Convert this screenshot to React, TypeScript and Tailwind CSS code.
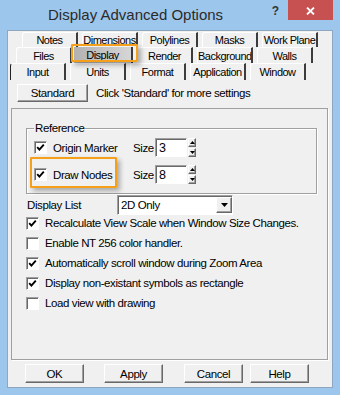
import type { ReactNode } from "react"

const raised =
	"border border-t-white border-l-white border-r-[#696969] border-b-[#696969] shadow-[inset_-1px_-1px_0_#a0a0a0]"
const sunken =
	"border border-t-[#a0a0a0] border-l-[#a0a0a0] border-r-white border-b-white shadow-[inset_1px_1px_0_#696969]"

const row1 = ["Notes", "Dimensions", "Polylines", "Masks", "Work Plane"]
const row3 = ["Input", "Units", "Format", "Application", "Window"]

const options = [
	{ label: "Recalculate View Scale when Window Size Changes.", on: true },
	{ label: "Enable NT 256 color handler.", on: false },
	{ label: "Automatically scroll window during Zoom Area", on: true },
	{ label: "Display non-existant symbols as rectangle", on: true },
	{ label: "Load view with drawing", on: false },
]

function Tab({ label, first }: { label: string; first?: boolean }) {
	return (
		<div
			className={`flex h-full w-[56px] shrink-0 items-center justify-center-safe overflow-hidden whitespace-nowrap rounded-tl-[3px] border-t border-l border-r-2 border-white border-r-[#3c3c3c] text-[11px] tracking-[-0.5px] ${first ? "border-l-[#222]" : ""}`}
		>
			{label}
		</div>
	)
}

function Highlight({ className }: { className: string }) {
	return (
		<div
			className={`pointer-events-none absolute z-10 rounded-[1px] border-2 border-[#f5a01a] shadow-[3px_3px_5px_rgba(0,0,0,0.3)] ${className}`}
		/>
	)
}

function Check({ on }: { on?: boolean }) {
	return (
		<span className={`flex h-[13px] w-[13px] shrink-0 items-center justify-center bg-white ${sunken}`}>
			{on && (
				<svg width="9" height="9" viewBox="0 0 9 9">
					<path d="M1.2 4.2 L3.4 6.6 L7.8 1.6" fill="none" stroke="#000" strokeWidth="1.9" />
				</svg>
			)}
		</span>
	)
}

function Arrow({ up }: { up?: boolean }) {
	return (
		<svg width="5" height="3" viewBox="0 0 5 3">
			<path d={up ? "M0 3 L2.5 0 L5 3Z" : "M0 0 L5 0 L2.5 3Z"} fill="#000" />
		</svg>
	)
}

function SizeField({ value }: { value: string }) {
	return (
		<div className="flex h-full items-center">
			<span className="w-[22px]">Size</span>
			<div className={`flex h-[19px] w-[32px] items-center bg-white pl-[3px] text-[12.5px] ${sunken}`}>{value}</div>
			<div className="ml-[1px] flex h-full w-[8px] flex-col gap-px">
				<div className={`flex flex-1 items-center justify-center bg-[#f0f0f0] ${raised}`}>
					<Arrow up />
				</div>
				<div className={`flex flex-1 items-center justify-center bg-[#f0f0f0] ${raised}`}>
					<Arrow />
				</div>
			</div>
		</div>
	)
}

function Button({ children, className }: { children: ReactNode; className: string }) {
	return (
		<div className={`flex h-full items-center justify-center bg-[#f0f0f0] ${raised} ${className}`}>{children}</div>
	)
}

export default function App() {
	return (
		<div className="h-[395px] w-[340px] overflow-hidden bg-[#9dc6ec] font-['Liberation_Sans',Arial,sans-serif] text-[11.5px] leading-[14px] tracking-[-0.4px] text-black">
			{/* Title bar */}
			<div className="flex h-[30px] tracking-normal">
				<div className="flex-1 pl-[48px] pt-[6px] text-[15px] leading-[18px] text-[#2b2b2b]">
					Display Advanced Options
				</div>
				<div className="mr-[9px] mt-[4px] text-[12px] font-bold leading-[14px] text-[#333]">?</div>
				<div className="mr-[7px] flex h-[20px] w-[45px] items-center justify-center bg-[#c75050] pt-[2px]">
					<svg width="9" height="8" viewBox="0 0 9 8">
						<path d="M1 0.5 L8 7.5 M8 0.5 L1 7.5" stroke="#fff" strokeWidth="1.8" />
					</svg>
				</div>
			</div>

			{/* Client area */}
			<div className="mx-[7px] h-[358px] border border-[#8ea6bf] bg-[#f0f0f0]">
				{/* Tabs */}
				<div className="ml-[14px] mt-[1px] flex h-[15px] gap-[4px]">
					{row1.map(t => (
						<Tab key={t} label={t} />
					))}
				</div>
				<div className="ml-[8px] flex h-[16px] gap-[4px]">
					<Tab label="Files" />
					<div className="relative -ml-[2px] flex h-full w-[59px] shrink-0 items-center justify-center border-r-2 border-r-[#3c3c3c] bg-gradient-to-r from-[#b2b2b2] to-[#d6d6d6] text-[11px] tracking-[-0.5px]">
						Display
						<Highlight className="-left-[3px] -top-[3px] h-[18px] w-[67px]" />
					</div>
					<Tab label="Render" />
					<Tab label="Background" />
					<Tab label="Walls" />
				</div>
				<div className="ml-[2px] flex h-[17px] gap-[4px]">
					{row3.map((t, i) => (
						<Tab key={t} label={t} first={i === 0} />
					))}
				</div>

				{/* Standard */}
				<div className="ml-[9px] mt-[4px] flex h-[18px] items-center gap-[8px]">
					<Button className="w-[71px]">Standard</Button>
					<span>Click 'Standard' for more settings</span>
				</div>

				{/* Page panel */}
				<div className="ml-[3px] mt-[6px] h-[252px] w-[317px] border border-[#a0a0a0] shadow-[1px_1px_0_#fff]">
					<div className="relative ml-[14px] mt-[19px] h-[66px] w-[291px] border border-[#a0a0a0] shadow-[inset_1px_1px_0_#fff,1px_1px_0_#fff]">
						<span className="absolute -top-[8px] left-[7px] bg-[#f0f0f0] px-[1px] leading-[14px]">Reference</span>

						<div className="ml-[7px] mt-[9px] flex h-[19px] items-center">
							<div className="flex w-[99px] items-center gap-[6px]">
								<Check on />
								<span>Origin Marker</span>
							</div>
							<SizeField value="3" />
						</div>

						<div className="relative ml-[7px] mt-[8px] flex h-[19px] items-center">
							<Highlight className="-left-[4px] -top-[8px] h-[31px] w-[87px]" />
							<div className="flex w-[99px] items-center gap-[6px]">
								<Check on />
								<span>Draw Nodes</span>
							</div>
							<SizeField value="8" />
						</div>
					</div>

					{/* Display list */}
					<div className="ml-[15px] mt-[1px] flex h-[20px] items-center">
						<span className="w-[90px]">Display List</span>
						<div className={`flex h-[20px] w-[116px] items-center justify-between bg-white pl-[3px] ${sunken}`}>
							<span>2D Only</span>
							<div className={`flex h-[16px] w-[16px] items-center justify-center bg-[#f0f0f0] ${raised}`}>
								<svg width="7" height="4" viewBox="0 0 7 4">
									<path d="M0 0 L7 0 L3.5 4Z" fill="#000" />
								</svg>
							</div>
						</div>
					</div>

					<div className="-mt-[2px] ml-[14px] flex flex-col">
						{options.map(o => (
							<div key={o.label} className="flex h-[20px] items-center gap-[6px]">
								<Check on={o.on} />
								<span className="whitespace-nowrap">{o.label}</span>
							</div>
						))}
					</div>
				</div>

				{/* Dialog buttons */}
				<div className="ml-[17px] mt-[4px] flex h-[19px]">
					<Button className="w-[59px]">OK</Button>
					<Button className="ml-[20px] w-[59px]">Apply</Button>
					<Button className="ml-[21px] w-[59px]">Cancel</Button>
					<Button className="ml-[7px] w-[59px]">Help</Button>
				</div>
			</div>
		</div>
	)
}
